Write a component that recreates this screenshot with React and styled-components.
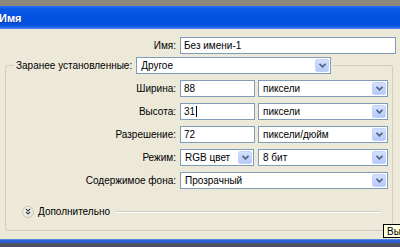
import React from "react";
import styled, { createGlobalStyle } from "styled-components";

const Global = createGlobalStyle`
  html, body { margin: 0; padding: 0; }
  body { background: #ece9d8; }
`;

const Window = styled.div`
  width: 400px;
  height: 247px;
  overflow: hidden;
  display: flex;
  flex-direction: column;
  position: relative;
  font-family: "Liberation Sans", Arial, sans-serif;
  font-size: 10px;
  color: #000;
  background: #ece9d8;
`;

const TopStrip = styled.div`
  height: 6px;
  background: #8c887e;
  flex: none;
`;

const TitleBar = styled.div`
  height: 23px;
  flex: none;
  display: flex;
  align-items: center;
  background: linear-gradient(
    #2a6ff0 0%,
    #0a5ae8 12%,
    #0553e3 40%,
    #0550dc 80%,
    #1e63e8 92%,
    #5a8cf0 100%
  );
  color: #fff;
  font-weight: bold;
  font-size: 11px;
  text-shadow: 1px 1px 0 #0a3aa8;
  span { margin-left: -1px; padding-top: 1px; }
`;

const Body = styled.div`
  flex: 1;
  display: flex;
  flex-direction: column;
  padding: 8px 7px 0 5px;
`;

const Row = styled.div`
  display: flex;
  align-items: center;
  height: 17px;
`;

const Label = styled.div`
  width: ${p => p.w}px;
  flex: none;
  text-align: right;
  padding-right: 4px;
  box-sizing: border-box;
  white-space: nowrap;
`;

const Input = styled.div`
  box-sizing: border-box;
  width: ${p => p.w}px;
  height: 17px;
  border: 1px solid #7f9db9;
  background: #fff;
  padding: 0 3px;
  display: flex;
  align-items: center;
  flex: none;
  white-space: nowrap;
`;

const Caret = styled.span`
  display: inline-block;
  width: 1px;
  height: 11px;
  background: #000;
  margin-left: 1px;
`;

const SelectBox = styled.div`
  box-sizing: border-box;
  width: ${p => p.w}px;
  height: 17px;
  border: 1px solid #7f9db9;
  background: #fff;
  padding: 0 0 0 4px;
  display: flex;
  align-items: center;
  margin-left: ${p => p.ml || 0}px;
  flex: none;
  span { flex: 1; white-space: nowrap; overflow: hidden; }
`;

const DropBtn = styled.div`
  width: 14px;
  height: 13px;
  margin-right: 1px;
  border-radius: 2px;
  background: linear-gradient(#d4e0fd, #b5c9f7);
  border: 1px solid #c3d3fd;
  box-sizing: border-box;
  display: flex;
  align-items: center;
  justify-content: center;
  flex: none;
`;

const Chevron = () => (
  <svg width="7" height="5" viewBox="0 0 7 5">
    <path d="M0.5 0.8 L3.5 3.8 L6.5 0.8" fill="none" stroke="#4d6185" strokeWidth="1.6" />
  </svg>
);

const Select = ({ w, ml, children }) => (
  <SelectBox w={w} ml={ml}>
    <span>{children}</span>
    <DropBtn><Chevron /></DropBtn>
  </SelectBox>
);

const Group = styled.fieldset`
  margin: 3px 0 0 0;
  width: 388px;
  box-sizing: border-box;
  border: 1px solid #d0cdbd;
  border-radius: 3px;
  padding: 0 4px 12px 8px;
  display: flex;
  flex-direction: column;
  gap: 6px;
`;

const Legend = styled.legend`
  padding: 0 2px;
  display: flex;
  align-items: center;
  height: 17px;
  margin-bottom: 6px;
`;

const More = styled.div`
  display: flex;
  align-items: center;
  height: 13px;
  margin-top: 10px;
  padding-left: 8px;
  gap: 4px;
`;

const MoreIcon = styled.div`
  width: 12px;
  height: 12px;
  border-radius: 50%;
  background: radial-gradient(circle at 40% 35%, #ffffff, #dcdcd4);
  border: 1px solid #c8c6bc;
  box-sizing: border-box;
  display: flex;
  align-items: center;
  justify-content: center;
`;

const Rule = styled.div`
  flex: 1;
  height: 1px;
  background: #d0cdbd;
  border-bottom: 1px solid #fff;
  margin: 0 8px 0 2px;
`;

const BottomBar = styled.div`
  height: 8px;
  flex: none;
  background: linear-gradient(#7fa3ec 0, #3166d8 1px, #2a5bd0 4px, #4f5460 4px, #4b505c 100%);
`;

const Tooltip = styled.div`
  position: absolute;
  left: 383px;
  top: 224px;
  height: 14px;
  padding: 0 3px;
  background: #ffffe1;
  border: 1px solid #000;
  box-sizing: border-box;
  display: flex;
  align-items: center;
  font-size: 10px;
`;

export default function App() {
  return (
    <Window>
      <Global />
      <TopStrip />
      <TitleBar><span>Имя</span></TitleBar>
      <Body>
        <Row>
          <Label w={175}>Имя:</Label>
          <Input w={216}>Без имени-1</Input>
        </Row>
        <Group>
          <Legend>
            <span>Заранее установленные:</span>
            <Select w={195} ml={4}>Другое</Select>
          </Legend>
          <Row>
            <Label w={166}>Ширина:</Label>
            <Input w={75}>88</Input>
            <Select w={130} ml={3}>пиксели</Select>
          </Row>
          <Row>
            <Label w={166}>Высота:</Label>
            <Input w={75}>31<Caret /></Input>
            <Select w={130} ml={3}>пиксели</Select>
          </Row>
          <Row>
            <Label w={166}>Разрешение:</Label>
            <Input w={75}>72</Input>
            <Select w={130} ml={3}>пиксели/дюйм</Select>
          </Row>
          <Row>
            <Label w={166}>Режим:</Label>
            <Select w={74}>RGB цвет</Select>
            <Select w={130} ml={4}>8 бит</Select>
          </Row>
          <Row>
            <Label w={166}>Содержимое фона:</Label>
            <Select w={208}>Прозрачный</Select>
          </Row>
          <More>
            <MoreIcon>
              <svg width="6" height="7" viewBox="0 0 6 7">
                <path d="M0.8 0.8 L3 3 L5.2 0.8 M0.8 3.8 L3 6 L5.2 3.8" fill="none" stroke="#3a3a3a" strokeWidth="1.2" />
              </svg>
            </MoreIcon>
            <span>Дополнительно</span>
            <Rule />
          </More>
        </Group>
      </Body>
      <BottomBar />
      <Tooltip>Выб</Tooltip>
    </Window>
  );
}
